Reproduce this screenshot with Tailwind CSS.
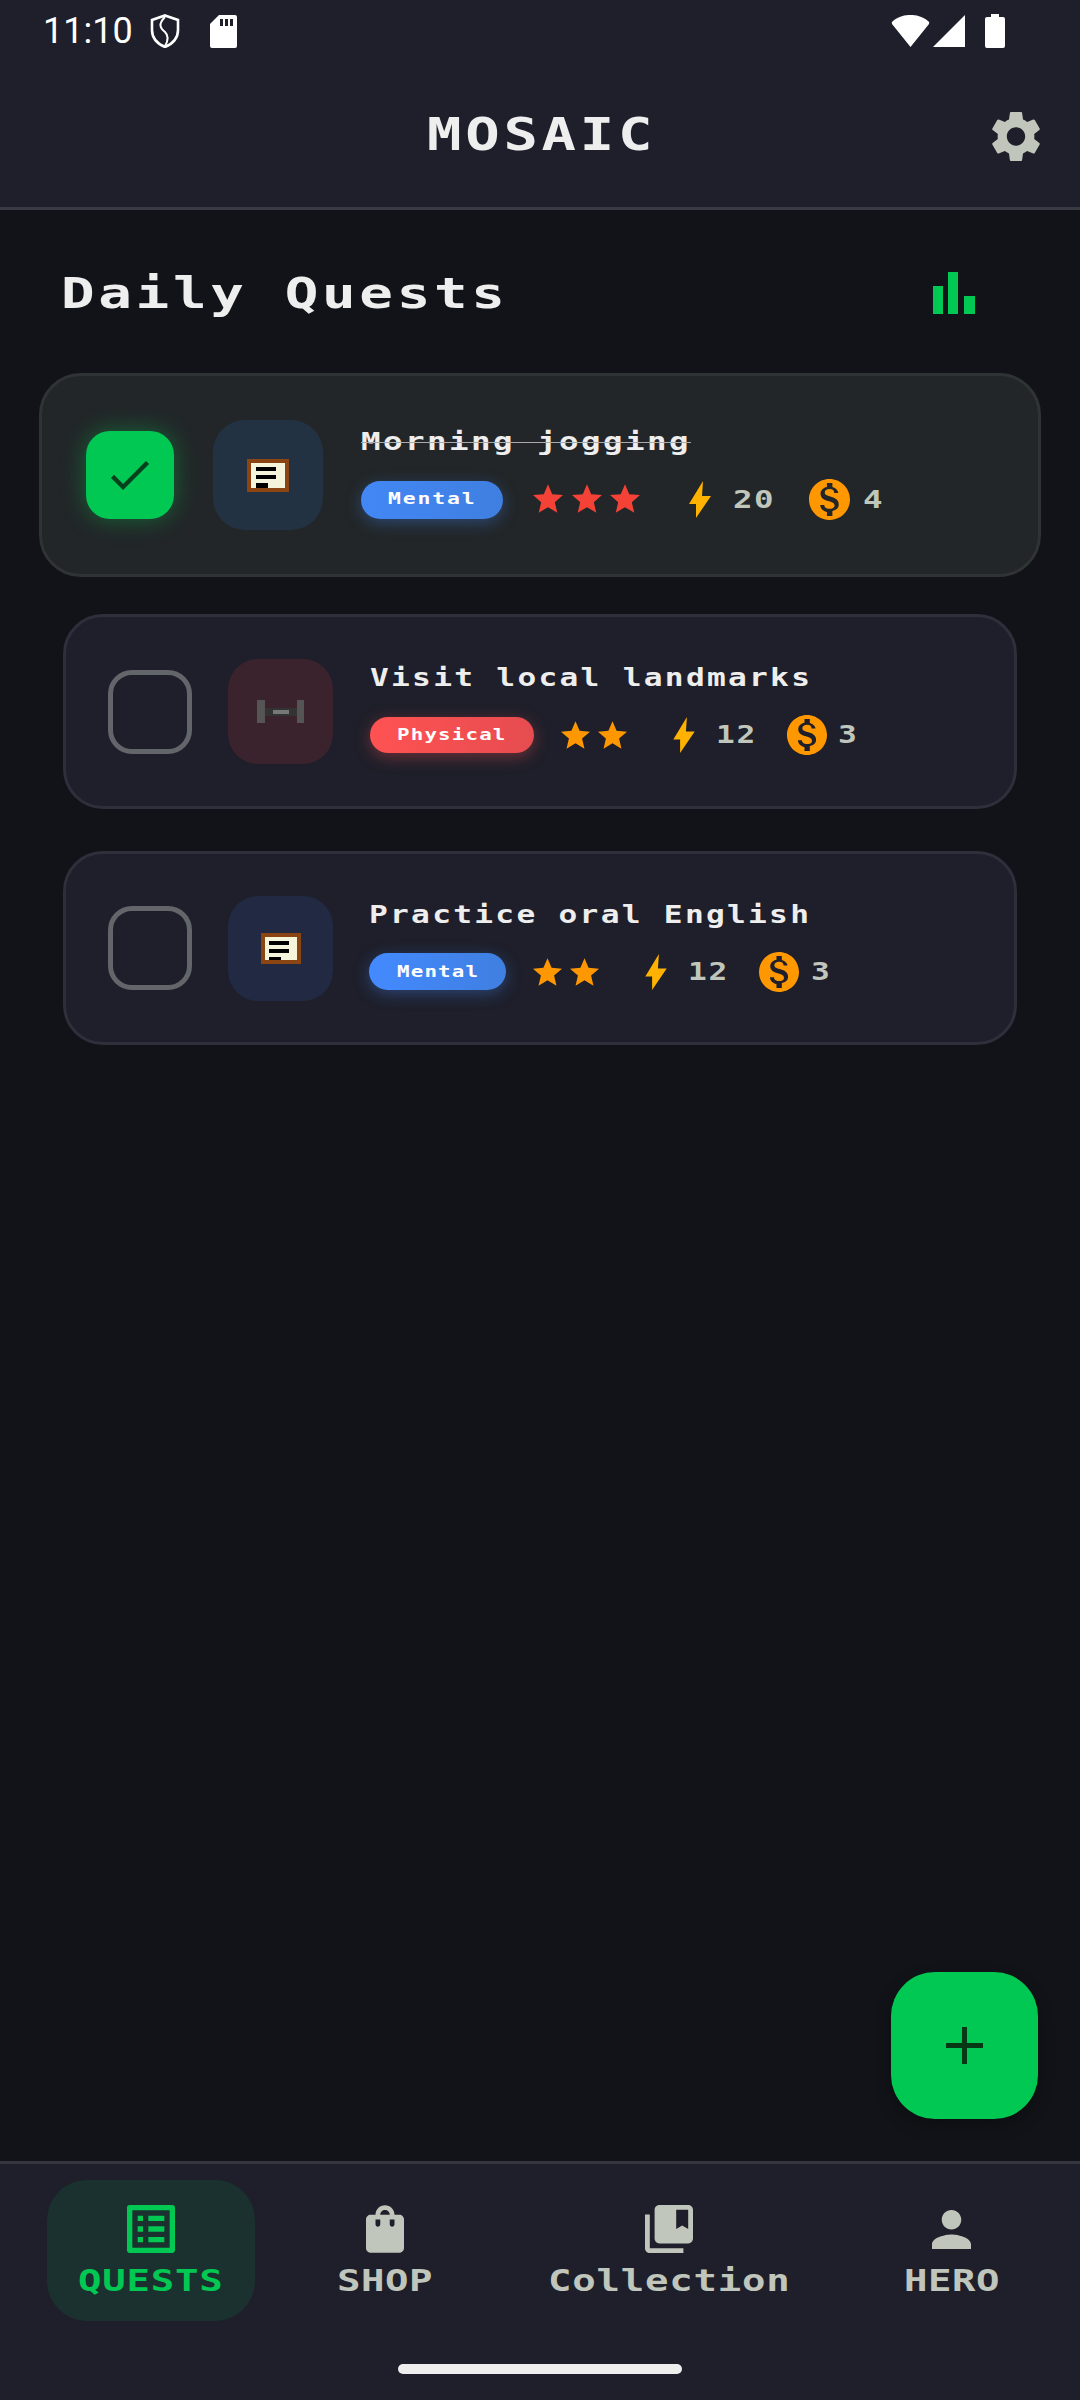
<!DOCTYPE html>
<html lang="en">
<head>
  <meta charset="UTF-8" />
  <meta name="viewport" content="width=device-width,initial-scale=1.0" />
  <title>Mosaic</title>
  <script src="https://cdn.jsdelivr.net/npm/@tailwindcss/browser@4"></script>
</head>
<body class="bg-[#121318]">
<div class="w-[1080px] h-[2400px] flex flex-col bg-[#121318] font-['DejaVu_Sans_Mono',monospace] font-bold overflow-hidden">

  <!-- Status bar + app bar -->
  <header class="bg-[#1e1f2a] border-b-[3px] border-[#3a3a44] h-[210px] shrink-0">
    <div class="h-[62px] flex items-center justify-between pl-[43px] pr-[75px]">
      <div class="flex items-center">
        <span class="font-['Roboto',sans-serif] font-normal text-[36px] leading-none text-white">11:10</span>
        <svg class="ml-[17px] w-[30px] h-[34px]" viewBox="0 0 30 34" fill="none" stroke="white" stroke-width="2.6"><path d="M15 1.5L28 6v10c0 9-6 14-13 17C8 30 2 25 2 16V6z"/><path d="M15 3C8 10 10 14 15 18c4 4 3 9 0 14" stroke-width="2"/></svg>
        <svg class="ml-[30px] w-[27px] h-[33px]" viewBox="0 0 27 33"><path fill="white" d="M9 0h16a2 2 0 0 1 2 2v29a2 2 0 0 1-2 2H2a2 2 0 0 1-2-2V9z"/><path fill="#1e1f2a" d="M10 4h3v7h-3zM15 4h3v7h-3zM20 4h3v7h-3z"/></svg>
      </div>
      <div class="flex items-center">
        <svg class="w-[39px] h-[32px]" viewBox="0 0 39 32"><path fill="white" d="M19.5 32L1 9Q0 7 2 6C8 1 14 0 19.5 0S31 1 37 6q2 1 1 3z"/></svg>
        <svg class="ml-[3px] w-[32px] h-[32px]" viewBox="0 0 32 32"><path fill="white" d="M32 0v32H0z"/></svg>
        <svg class="ml-[20px] w-[20px] h-[34px]" viewBox="0 0 20 34"><path fill="white" d="M6 0h8v3h4a2 2 0 0 1 2 2v27a2 2 0 0 1-2 2H2a2 2 0 0 1-2-2V5a2 2 0 0 1 2-2h4z"/></svg>
      </div>
    </div>
    <div class="h-[145px] grid grid-cols-[1fr_auto_1fr] items-center">
      <div></div>
      <span class="block w-[226px] origin-left scale-x-[1.3] text-[44px] leading-none tracking-[2.9px] text-[#eeeeee] whitespace-nowrap">MOSAIC</span>
      <svg class="justify-self-end mr-[40px] w-[48px] h-[51px] mt-[3px]" viewBox="2.7 2 18.6 20"><path fill="#c0c6bc" d="M19.14 12.94c.04-.3.06-.61.06-.94 0-.32-.02-.64-.07-.94l2.03-1.58c.18-.14.23-.41.12-.61l-1.92-3.32c-.12-.22-.37-.29-.59-.22l-2.39.96c-.5-.38-1.03-.7-1.62-.94l-.36-2.54c-.04-.24-.24-.41-.48-.41h-3.84c-.24 0-.43.17-.47.41l-.36 2.54c-.59.24-1.13.57-1.62.94l-2.39-.96c-.22-.08-.47 0-.59.22L2.74 8.87c-.12.21-.08.47.12.61l2.03 1.58c-.05.3-.09.63-.09.94s.02.64.07.94l-2.03 1.58c-.18.14-.23.41-.12.61l1.92 3.32c.12.22.37.29.59.22l2.39-.96c.5.38 1.03.7 1.62.94l.36 2.54c.05.24.24.41.48.41h3.84c.24 0 .44-.17.47-.41l.36-2.54c.59-.24 1.13-.56 1.62-.94l2.39.96c.22.08.47 0 .59-.22l1.92-3.32c.12-.22.07-.47-.12-.61l-2.01-1.58zM12 15.6c-1.98 0-3.6-1.62-3.6-3.6s1.62-3.6 3.6-3.6 3.6 1.62 3.6 3.6-1.62 3.6-3.6 3.6z"/></svg>
    </div>
  </header>

  <!-- Quest list -->
  <main class="relative flex-1 pt-[43px]">
    <div class="h-[80px] flex items-center justify-between pl-[61px] pr-[105px]">
      <span class="block w-[443px] origin-left scale-x-[1.3] text-[43px] leading-none tracking-[2.8px] text-[#eeeeee] whitespace-nowrap">Daily Quests</span>
      <svg class="w-[42px] h-[42px]" viewBox="0 0 42 42"><path fill="#00c853" d="M0 14h10v28H0zM15 0h10v42H15zM31 24h11v18H31z"/></svg>
    </div>

    <!-- done quest -->
    <section class="mt-[40px] ml-[39px] w-[1002px] h-[204px] rounded-[42px] border-[3px] border-[#2f3335] bg-[#222628] flex items-center pl-[44px]">
      <div class="w-[88px] h-[88px] shrink-0 rounded-[24px] bg-[#00c853] shadow-[0_0_24px_rgba(0,200,83,0.4)] flex items-center justify-center">
        <svg class="w-[40px] h-[29px]" viewBox="3.4 5.6 17.6 13.4"><path fill="#06401c" d="M9 16.17L4.83 12l-1.42 1.41L9 19 21 7l-1.41-1.41z"/></svg>
      </div>
      <div class="ml-[39px] w-[110px] h-[110px] shrink-0 rounded-[32px] bg-[#233242] flex items-center justify-center">
        <div class="w-[42px] h-[33px] border-[4px] border-[#8b4513] bg-[#f5f5dc] flex flex-col gap-[4px] pl-[5px] pt-[4px]">
          <div class="w-[20px] h-[4px] bg-black"></div>
          <div class="w-[20px] h-[4px] bg-black"></div>
          <div class="w-[12px] h-[5px] bg-black"></div>
        </div>
      </div>
      <div class="ml-[38px] pb-[2px] flex flex-col">
        <span class="block h-[24px] w-[331px] origin-left scale-x-[1.3] text-[25px] leading-[24px] tracking-[1.87px] text-[#eeeeee] whitespace-nowrap line-through decoration-[#aaaaaa] decoration-1">Morning jogging</span>
        <div class="mt-[27px] h-[38px] flex items-center">
          <div class="w-[142px] h-[38px] rounded-full bg-gradient-to-r from-[#4287f5] to-[#3f7fe0] shadow-[0_4px_16px_rgba(66,135,245,0.35)] flex items-center justify-center">
            <span class="block w-[88px] origin-left scale-x-[1.3] text-[16.5px] leading-none tracking-[1.4px] text-white whitespace-nowrap">Mental</span>
          </div>
          <div class="ml-[30px] mb-[3px] flex gap-[8.7px]">
            <svg class="w-[30px] h-[29px]" viewBox="2 2 20 19"><path fill="#f44336" d="M12 17.27L18.18 21l-1.64-7.03L22 9.24l-7.19-.61L12 2 9.19 8.63 2 9.24l5.46 4.73L5.82 21z"/></svg>
            <svg class="w-[30px] h-[29px]" viewBox="2 2 20 19"><path fill="#f44336" d="M12 17.27L18.18 21l-1.64-7.03L22 9.24l-7.19-.61L12 2 9.19 8.63 2 9.24l5.46 4.73L5.82 21z"/></svg>
            <svg class="w-[30px] h-[29px]" viewBox="2 2 20 19"><path fill="#f44336" d="M12 17.27L18.18 21l-1.64-7.03L22 9.24l-7.19-.61L12 2 9.19 8.63 2 9.24l5.46 4.73L5.82 21z"/></svg>
          </div>
          <svg class="ml-[49px] w-[22px] h-[37px]" viewBox="0 0 22 37"><path fill="#ffb300" d="M14 0L0 23h7L7 37 22 15h-9z"/></svg>
          <span class="block ml-[22px] w-[42px] origin-left scale-x-[1.3] text-[25px] leading-none tracking-[1.1px] text-[#c0c6bc]">20</span>
          <svg class="ml-[34px] w-[41px] h-[41px]" viewBox="2 2 20 20"><path fill="#ff9800" d="M12 2C6.48 2 2 6.48 2 12s4.48 10 10 10 10-4.48 10-10S17.52 2 12 2zm1.41 16.09V20h-2.67v-1.93c-1.71-.36-3.16-1.46-3.27-3.4h1.96c.1 1.05.82 1.87 2.65 1.87 1.96 0 2.4-.98 2.4-1.59 0-.83-.44-1.61-2.67-2.14-2.48-.6-4.18-1.62-4.18-3.67 0-1.72 1.39-2.84 3.11-3.21V4h2.67v1.95c1.86.45 2.79 1.86 2.85 2.85h-1.96c-.05-1.11-.64-1.87-2.22-1.87-1.5 0-2.4.68-2.4 1.64 0 .84.65 1.39 2.67 1.91s4.18 1.39 4.18 3.91c-.01 1.83-1.38 2.83-3.12 3.16z"/></svg>
          <span class="block ml-[13px] w-[20px] origin-left scale-x-[1.3] text-[25px] leading-none text-[#c0c6bc]">4</span>
        </div>
      </div>
    </section>

    <!-- physical quest -->
    <section class="mt-[37px] ml-[63px] w-[954px] h-[195px] rounded-[40px] border-[3px] border-[#2e2f3b] bg-[#1e1f2a] flex items-center pl-[42px]">
      <div class="w-[84px] h-[84px] shrink-0 rounded-[24px] border-[5px] border-[#62666a]"></div>
      <div class="ml-[36px] w-[105px] h-[105px] shrink-0 rounded-[30px] bg-[#3a232d] flex items-center justify-center">
        <div class="flex items-center">
          <div class="w-[8px] h-[23px] bg-[#555555]"></div>
          <div class="w-[32px] h-[8px] bg-[#333333] flex items-center justify-center"><div class="w-[16px] h-[4px] bg-[#777777]"></div></div>
          <div class="w-[7px] h-[23px] bg-[#555555]"></div>
        </div>
      </div>
      <div class="ml-[37px] pb-[5px] flex flex-col">
        <span class="block h-[24px] w-[438px] origin-left scale-x-[1.3] text-[24px] leading-[24px] tracking-[1.75px] text-[#eeeeee] whitespace-nowrap">Visit local landmarks</span>
        <div class="mt-[27px] h-[36px] flex items-center">
          <div class="w-[164px] h-[36px] rounded-full bg-gradient-to-r from-[#ff5252] to-[#e64c50] shadow-[0_4px_16px_rgba(255,82,82,0.35)] flex items-center justify-center">
            <span class="block w-[110px] origin-left scale-x-[1.3] text-[16px] leading-none tracking-[0.9px] text-white whitespace-nowrap">Physical</span>
          </div>
          <div class="ml-[27px] flex gap-[8px]">
            <svg class="w-[29px] h-[28px]" viewBox="2 2 20 19"><path fill="#ff9800" d="M12 17.27L18.18 21l-1.64-7.03L22 9.24l-7.19-.61L12 2 9.19 8.63 2 9.24l5.46 4.73L5.82 21z"/></svg>
            <svg class="w-[29px] h-[28px]" viewBox="2 2 20 19"><path fill="#ff9800" d="M12 17.27L18.18 21l-1.64-7.03L22 9.24l-7.19-.61L12 2 9.19 8.63 2 9.24l5.46 4.73L5.82 21z"/></svg>
          </div>
          <svg class="ml-[46px] w-[22px] h-[36px]" viewBox="0 0 22 37"><path fill="#ffb300" d="M14 0L0 23h7L7 37 22 15h-9z"/></svg>
          <span class="block ml-[21px] w-[40px] origin-left scale-x-[1.3] text-[24px] leading-none tracking-[1.4px] text-[#c0c6bc]">12</span>
          <svg class="ml-[31px] w-[40px] h-[40px]" viewBox="2 2 20 20"><path fill="#ff9800" d="M12 2C6.48 2 2 6.48 2 12s4.48 10 10 10 10-4.48 10-10S17.52 2 12 2zm1.41 16.09V20h-2.67v-1.93c-1.71-.36-3.16-1.46-3.27-3.4h1.96c.1 1.05.82 1.87 2.65 1.87 1.96 0 2.4-.98 2.4-1.59 0-.83-.44-1.61-2.67-2.14-2.48-.6-4.18-1.62-4.18-3.67 0-1.72 1.39-2.84 3.11-3.21V4h2.67v1.95c1.86.45 2.79 1.86 2.85 2.85h-1.96c-.05-1.11-.64-1.87-2.22-1.87-1.5 0-2.4.68-2.4 1.64 0 .84.65 1.39 2.67 1.91s4.18 1.39 4.18 3.91c-.01 1.83-1.38 2.83-3.12 3.16z"/></svg>
          <span class="block ml-[11px] w-[20px] origin-left scale-x-[1.3] text-[24px] leading-none text-[#c0c6bc]">3</span>
        </div>
      </div>
    </section>

    <!-- mental quest -->
    <section class="mt-[42px] ml-[63px] w-[954px] h-[194px] rounded-[40px] border-[3px] border-[#2e2f3b] bg-[#1e1f2a] flex items-center pl-[42px]">
      <div class="w-[84px] h-[84px] shrink-0 rounded-[24px] border-[5px] border-[#62666a]"></div>
      <div class="ml-[36px] w-[105px] h-[105px] shrink-0 rounded-[30px] bg-[#212a42] flex items-center justify-center">
        <div class="w-[40px] h-[31px] border-[4px] border-[#8b4513] bg-[#f5f5dc] flex flex-col gap-[4px] pl-[4px] pt-[4px]">
          <div class="w-[20px] h-[4px] bg-black"></div>
          <div class="w-[20px] h-[4px] bg-black"></div>
          <div class="w-[12px] h-[3px] bg-black"></div>
        </div>
      </div>
      <div class="ml-[36px] pb-[3px] flex flex-col">
        <span class="block h-[24px] w-[441px] origin-left scale-x-[1.3] text-[24px] leading-[24px] tracking-[1.75px] text-[#eeeeee] whitespace-nowrap">Practice oral English</span>
        <div class="mt-[26px] h-[37px] flex items-center">
          <div class="w-[137px] h-[37px] rounded-full bg-gradient-to-r from-[#448aff] to-[#3f7fe0] shadow-[0_4px_16px_rgba(68,138,255,0.35)] flex items-center justify-center">
            <span class="block w-[82px] origin-left scale-x-[1.3] text-[16px] leading-none tracking-[0.9px] text-white whitespace-nowrap">Mental</span>
          </div>
          <div class="ml-[27px] flex gap-[8px]">
            <svg class="w-[29px] h-[28px]" viewBox="2 2 20 19"><path fill="#ff9800" d="M12 17.27L18.18 21l-1.64-7.03L22 9.24l-7.19-.61L12 2 9.19 8.63 2 9.24l5.46 4.73L5.82 21z"/></svg>
            <svg class="w-[29px] h-[28px]" viewBox="2 2 20 19"><path fill="#ff9800" d="M12 17.27L18.18 21l-1.64-7.03L22 9.24l-7.19-.61L12 2 9.19 8.63 2 9.24l5.46 4.73L5.82 21z"/></svg>
          </div>
          <svg class="ml-[46px] w-[22px] h-[36px]" viewBox="0 0 22 37"><path fill="#ffb300" d="M14 0L0 23h7L7 37 22 15h-9z"/></svg>
          <span class="block ml-[21px] w-[40px] origin-left scale-x-[1.3] text-[24px] leading-none tracking-[1.4px] text-[#c0c6bc]">12</span>
          <svg class="ml-[31px] w-[40px] h-[40px]" viewBox="2 2 20 20"><path fill="#ff9800" d="M12 2C6.48 2 2 6.48 2 12s4.48 10 10 10 10-4.48 10-10S17.52 2 12 2zm1.41 16.09V20h-2.67v-1.93c-1.71-.36-3.16-1.46-3.27-3.4h1.96c.1 1.05.82 1.87 2.65 1.87 1.96 0 2.4-.98 2.4-1.59 0-.83-.44-1.61-2.67-2.14-2.48-.6-4.18-1.62-4.18-3.67 0-1.72 1.39-2.84 3.11-3.21V4h2.67v1.95c1.86.45 2.79 1.86 2.85 2.85h-1.96c-.05-1.11-.64-1.87-2.22-1.87-1.5 0-2.4.68-2.4 1.64 0 .84.65 1.39 2.67 1.91s4.18 1.39 4.18 3.91c-.01 1.83-1.38 2.83-3.12 3.16z"/></svg>
          <span class="block ml-[12px] w-[20px] origin-left scale-x-[1.3] text-[24px] leading-none text-[#c0c6bc]">3</span>
        </div>
      </div>
    </section>

    <!-- FAB -->
    <button class="absolute right-[42px] bottom-[42px] w-[147px] h-[147px] rounded-[44px] bg-[#00c853] shadow-[0_6px_16px_rgba(0,0,0,0.3)] flex items-center justify-center">
      <svg class="w-[37px] h-[37px]" viewBox="0 0 37 37"><path fill="#063815" d="M16 0h5v16h16v5H21v16h-5V21H0v-5h16z"/></svg>
    </button>
  </main>

  <!-- Bottom nav -->
  <nav class="h-[239px] shrink-0 bg-[#1e1f2a] border-t-[3px] border-[#35353f] flex flex-col">
    <div class="flex pl-[47px] pt-[16px]">
      <a class="w-[208px] h-[141px] rounded-[40px] bg-[#1b312f] flex flex-col items-center pt-[25px]">
        <svg class="w-[48px] h-[48px]" viewBox="3 3 18 18"><path fill="#00c853" d="M19 5v14H5V5h14m1.1-2H3.9c-.5 0-.9.4-.9.9v16.2c0 .4.4.9.9.9h16.2c.4 0 .9-.5.9-.9V3.9c0-.5-.5-.9-.9-.9zM11 7h6v2h-6V7zm0 4h6v2h-6v-2zm0 4h6v2h-6v-2zM7 7h2v2H7zm0 4h2v2H7zm0 4h2v2H7z"/></svg>
        <span class="block mt-[13px] w-[146px] h-[30px] origin-left scale-x-[1.3] text-[30px] leading-[30px] tracking-[0.6px] text-[#00c853] whitespace-nowrap">QUESTS</span>
      </a>
      <a class="ml-[52px] w-[155px] h-[141px] flex flex-col items-center pt-[25px]">
        <svg class="w-[38px] h-[48px]" viewBox="4 2 16 20"><path fill="#c0c6bc" d="M18 6h-2c0-2.21-1.79-4-4-4S8 3.79 8 6H6c-1.1 0-2 .9-2 2v12c0 1.1.9 2 2 2h12c1.1 0 2-.9 2-2V8c0-1.1-.9-2-2-2zm-8 4c0 .55-.45 1-1 1s-1-.45-1-1V8h2v2zm2-6c1.1 0 2 .9 2 2h-4c0-1.1.9-2 2-2zm4 6c0 .55-.45 1-1 1s-1-.45-1-1V8h2v2z"/></svg>
        <span class="block mt-[13px] ml-[-3px] w-[93px] h-[30px] origin-left scale-x-[1.3] text-[30px] leading-[30px] tracking-[0.4px] text-[#c0c6bc] whitespace-nowrap">SHOP</span>
      </a>
      <a class="ml-[56px] w-[301px] h-[141px] flex flex-col items-center pt-[25px]">
        <svg class="w-[48px] h-[48px]" viewBox="2 2 20 20"><path fill="#c0c6bc" d="M4 6H2v14c0 1.1.9 2 2 2h14v-2H4V6z"/><path fill="#c0c6bc" d="M20 2H8c-1.1 0-2 .9-2 2v12c0 1.1.9 2 2 2h12c1.1 0 2-.9 2-2V4c0-1.1-.9-2-2-2zm0 10l-2.5-1.5L15 12V4h5v8z"/></svg>
        <span class="block mt-[13px] ml-[-3px] w-[239px] h-[30px] origin-left scale-x-[1.3] text-[30px] leading-[30px] tracking-[0.6px] text-[#c0c6bc] whitespace-nowrap">Collection</span>
      </a>
      <a class="ml-[54px] w-[157px] h-[141px] flex flex-col items-center pt-[25px]">
        <div class="h-[48px] flex items-center">
          <svg class="w-[39px] h-[39px]" viewBox="4 4 16 16"><path fill="#c0c6bc" d="M12 12c2.21 0 4-1.79 4-4s-1.79-4-4-4-4 1.79-4 4 1.79 4 4 4zm0 2c-2.67 0-8 1.34-8 4v2h16v-2c0-2.66-5.33-4-8-4z"/></svg>
        </div>
        <span class="block mt-[13px] w-[95px] h-[30px] origin-left scale-x-[1.3] text-[30px] leading-[30px] tracking-[0.4px] text-[#c0c6bc] whitespace-nowrap">HERO</span>
      </a>
    </div>
    <div class="mt-[43px] ml-[398px] w-[284px] h-[10px] rounded-full bg-[#eeeeee]"></div>
  </nav>
</div>
</body>
</html>
